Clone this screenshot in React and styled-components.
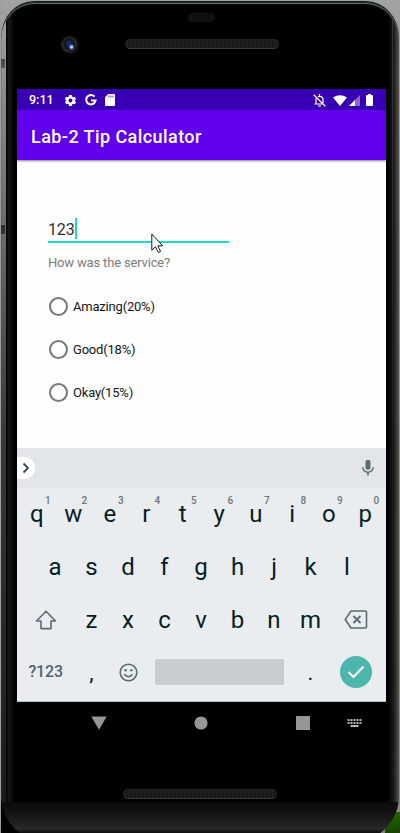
import React from 'react';
import styled, { createGlobalStyle } from 'styled-components';

const Global = createGlobalStyle`
  *, *::before, *::after { box-sizing: border-box; }
  body { margin: 0; overflow: hidden; font-family: Roboto, "Liberation Sans", sans-serif; }
`;

const Backdrop = styled.div`
  width: 400px;
  height: 833px;
  overflow: hidden;
  padding: 1px 1px 0 1px;
  background:
    linear-gradient(#246407, #174500) 385px 812px / 15px 21px no-repeat,
    linear-gradient(#000, #000) 1px 800px / 40px 33px no-repeat,
    linear-gradient(90deg, #9a9e9c 0 1px, transparent 1px),
    linear-gradient(#a0a3a1 0, #9a9a9a 60px, #858585 100%);
`;

const Shell = styled.div`
  position: relative;
  width: 398px;
  height: 841px;
  overflow: hidden;
  padding: 88px 13px 0 16px;
  border-radius: 33px 33px 46px 46px / 36px 36px 46px 46px;
  background:
    linear-gradient(#444, #555) 0 58px / 4px 9px no-repeat,
    linear-gradient(#2c2f2e, #333) 0 224px / 4px 9px no-repeat,
    linear-gradient(transparent 800px, #0b0b0b 802px, #121212 811px, #1b1b1b 818px, #292929 828px, #050505 833px),
    linear-gradient(90deg, transparent 0 5px, #000 5px, #171717 8px, #101010 10px, #000 13px 387px, #151515 391px, transparent 393px),
    linear-gradient(90deg, transparent 0 392px, #151413 392px, #35332f 395px, #5b5955 398px),
    linear-gradient(#a0a3a1 0, #858886 110px, #606462 260px, #343939 440px, #222827 650px, #151818 832px);
  box-shadow: inset 0 2px 1px #18201b, inset 0 3px 1px #768078;
`;

const Sensor = styled.div`
  position: absolute;
  left: 187px;
  top: 12px;
  width: 27px;
  height: 9px;
  border-radius: 5px;
  background: #101010;
`;

const Camera = styled.div`
  position: absolute;
  left: 60px;
  top: 35px;
  width: 18px;
  height: 18px;
  border-radius: 50%;
  background:
    radial-gradient(circle at 10.5px 11px, #b9ceff 0 1px, #3658bd 2px, transparent 3px),
    radial-gradient(circle at 8px 8px, #172d68 0 2px, #0b111e 4.5px, #252525 6px, #202020 8px, #101010 9px);
`;

const Speaker = styled.div`
  position: absolute;
  left: ${(p) => p.$left}px;
  top: ${(p) => p.$top}px;
  width: 154px;
  height: ${(p) => p.$height}px;
  border: 1px solid #252624;
  border-bottom-color: #3d3e3c;
  border-radius: 5px;
  background: repeating-linear-gradient(90deg, #20201e 0 2px, #181817 2px 4px);
`;

const Screen = styled.main`
  width: 369px;
  height: 655px;
  background: #000;
  display: flex;
  flex-direction: column;
`;

const StatusBar = styled.header`
  height: 21px;
  flex: none;
  background: #3900b3;
  color: #fff;
  display: flex;
  align-items: center;
  padding: 1px 13px 0 12px;
`;

const Clock = styled.span`
  width: 35px;
  font-size: 12.5px;
  font-weight: 500;
  line-height: 20px;
`;

const StatusGroup = styled.div`
  display: flex;
  align-items: center;
  gap: ${(p) => p.$gap}px;
  margin-left: ${(p) => (p.$end ? 'auto' : '0')};
`;

const AppBar = styled.div`
  height: 50px;
  flex: none;
  padding: 3px 14px 0;
  display: flex;
  align-items: center;
  background: #6000ec;
  color: #fff;
  position: relative;
  box-shadow: 0 1px 2px rgba(0, 0, 0, .5);
`;

const Title = styled.h1`
  margin: 0;
  font-size: 18px;
  line-height: 24px;
  font-weight: 500;
  letter-spacing: .43px;
  white-space: nowrap;
`;

const Form = styled.section`
  height: 288px;
  flex: none;
  background: #fefefe;
  padding: 58px 31px 0;
  display: flex;
  flex-direction: column;
  align-items: flex-start;
`;

const Amount = styled.div`
  position: relative;
  width: 181px;
  height: 25px;
  border-bottom: 2px solid #20d8c6;
  display: flex;
  align-items: flex-start;
  font-size: 16px;
  line-height: 23px;
  letter-spacing: -.15px;
  color: #303030;
`;

const Caret = styled.span`
  width: 2px;
  height: 21px;
  background: #20d8c6;
`;

const Pointer = styled.svg`
  position: absolute;
  left: 103px;
  top: 15px;
`;

const Question = styled.p`
  margin: 11px 0 0;
  font-size: 13px;
  line-height: 17px;
  letter-spacing: -.17px;
  color: #7c7c7c;
  white-space: nowrap;
`;

const Options = styled.div`
  display: flex;
  flex-direction: column;
  margin-top: 14px;
`;

const Option = styled.label`
  height: 43px;
  display: flex;
  align-items: center;
  gap: 5px;
  padding-left: 1px;
  font-size: 13px;
  letter-spacing: -.2px;
  color: #151515;
  white-space: nowrap;
`;

const Radio = styled.span`
  width: 19px;
  height: 19px;
  border: 2px solid #777;
  border-radius: 50%;
`;

const Strip = styled.div`
  height: 40px;
  flex: none;
  display: flex;
  align-items: center;
  justify-content: space-between;
  padding-right: 8px;
  background: #e2e6e9;
`;

const Expand = styled.div`
  width: 18px;
  height: 22px;
  border-radius: 0 11px 11px 0;
  background: #fff;
  display: flex;
  align-items: center;
  justify-content: center;
`;

const Keys = styled.div`
  height: 214px;
  flex: none;
  background: #e9edf0;
  border-bottom: 1px solid #b6bdc0;
  padding: 0 2px 0 1px;
  display: flex;
  flex-direction: column;
`;

const KeyRow = styled.div`
  height: ${(p) => p.$height || 53}px;
  display: flex;
  align-items: center;
  justify-content: center;
`;

const Key = styled.div`
  position: relative;
  width: ${(p) => p.$width || 36.5}px;
  height: 100%;
  display: flex;
  align-items: center;
  justify-content: center;
  font-size: 24px;
  line-height: 28px;
  color: #071d26;
`;

const Hint = styled.span`
  position: absolute;
  left: 26.5px;
  top: 7px;
  font-size: 10px;
  line-height: 11px;
  font-weight: 500;
  color: #6c777c;
`;

const Mode = styled.span`
  font-size: 16px;
  font-weight: 500;
  color: #52636b;
  letter-spacing: -.1px;
`;

const Punctuation = styled.span`
  font-size: 22px;
  transform: translateY(1px);
`;

const Space = styled.div`
  width: 129px;
  height: 26px;
  border-radius: 2px;
  background: #c8cccf;
`;

const SpaceSlot = styled.div`
  width: 146px;
  display: flex;
  justify-content: center;
`;

const Enter = styled.div`
  width: 32px;
  height: 32px;
  border-radius: 50%;
  background: #4db6ac;
  display: flex;
  align-items: center;
  justify-content: center;
`;

const NavBar = styled.nav`
  height: 42px;
  flex: none;
  display: grid;
  grid-template-columns: 31px 102px 102px 102px 32px;
  align-items: center;
  color: #969696;
`;

const NavItem = styled.div`
  display: flex;
  justify-content: center;
  ${(p) => p.$start && 'grid-column-start: 2;'}
`;

const KeyboardItem = styled(NavItem)`
  justify-content: flex-start;
  svg { flex: none; margin-left: -7px; }
`;

const Gear = () => (
  <svg width="13" height="13" viewBox="2 1.5 21 21" fill="#fff">
    <path fillRule="evenodd" d="M19.4 13c.1-.7.1-1.3 0-2l2.1-1.6-2-3.5-2.5 1a8 8 0 0 0-1.7-1L15 3h-5l-.4 2.9a8 8 0 0 0-1.7 1l-2.5-1-2 3.5L5.5 11c-.1.7-.1 1.3 0 2l-2.1 1.6 2 3.5 2.5-1a8 8 0 0 0 1.7 1L10 21h5l.3-2.9a8 8 0 0 0 1.7-1l2.5 1 2-3.5zM12.5 15.2a3.2 3.2 0 1 1 0-6.4 3.2 3.2 0 0 1 0 6.4z" />
  </svg>
);

const GoogleMark = () => (
  <svg width="12" height="12" viewBox="0 0 12 12" fill="none" stroke="#fff" strokeWidth="2">
    <path d="M9.6 2.7A4.7 4.7 0 1 0 10.6 6.4H6" />
  </svg>
);

const SdCard = () => (
  <svg width="10" height="12" viewBox="0 0 10 12">
    <path fill="#fff" d="M3.2 0H9q1 0 1 1v10q0 1-1 1H1q-1 0-1-1V3.2z" />
    <path stroke="#3900b3" strokeWidth=".8" d="M4 1.5v2M6 1.5v2M8 1.5v2" />
  </svg>
);

const BellOff = () => (
  <svg width="13" height="13" viewBox="0 0 13 13" fill="none" stroke="#fff" strokeWidth="1.2">
    <path d="M3 10V6q0-2 1-2.8M5 2.6q4-1.2 5 2.4v4M1.5 10H10M5 12h3M6.5 0v2M.7.8l11.6 11.5" />
  </svg>
);

const Wifi = () => (
  <svg width="14" height="11" viewBox="0 0 14 11"><path fill="#fff" d="M0 2.5Q7-2.2 14 2.5L7 11z" /></svg>
);

const Signal = () => (
  <svg width="11" height="11" viewBox="0 0 11 11">
    <path fill="#8c67d3" d="M0 11 11 0v11z" /><path fill="#fff" d="M0 11 6 5v6z" />
  </svg>
);

const Battery = () => (
  <svg width="7" height="12" viewBox="0 0 7 12"><path fill="#fff" d="M2 0h3v1h1q1 0 1 1v9q0 1-1 1H1q-1 0-1-1V2q0-1 1-1h1z" /></svg>
);

const Mouse = () => (
  <Pointer width="13" height="21" viewBox="0 0 13 21">
    <path fill="#fff" stroke="#17192a" d="M.8 1v16.2l3.7-3.4 2.8 5.7 2.3-1.2-2.8-5.5h4.9z" />
  </Pointer>
);

const Chevron = () => (
  <svg width="8" height="12" viewBox="0 0 8 12" fill="none" stroke="#37474f" strokeWidth="1.8"><path d="m1.5 1.5 4.5 4.5-4.5 4.5" /></svg>
);

const Mic = () => (
  <svg width="20" height="20" viewBox="0 0 24 24" fill="#5b6b72">
    <path d="M12 14a3 3 0 0 0 3-3V5a3 3 0 0 0-6 0v6a3 3 0 0 0 3 3zm5.3-3a5.3 5.3 0 0 1-10.6 0H5c0 3.4 2.7 6.2 6 6.7V21h2v-3.3c3.3-.5 6-3.3 6-6.7z" />
  </svg>
);

const Shift = () => (
  <svg width="22" height="20" viewBox="0 0 22 20" fill="none" stroke="#5b6b72" strokeWidth="1.6" strokeLinejoin="round">
    <path d="M11 1.2 1.5 11H6v7.6h10V11h4.5z" />
  </svg>
);

const Backspace = () => (
  <svg width="24" height="19" viewBox="0 0 24 19" fill="none" stroke="#5b6b72" strokeWidth="1.6" strokeLinejoin="round">
    <path d="M7 1h14.5q1 0 1 1v15q0 1-1 1H7L1.3 9.5z" />
    <path strokeWidth="1.9" d="M9.5 6l7 7M16.5 6l-7 7" />
  </svg>
);

const Smile = () => (
  <svg width="19" height="19" viewBox="0 0 19 19">
    <circle cx="9.5" cy="9.5" r="8.3" fill="none" stroke="#5b6b72" strokeWidth="1.6" />
    <circle cx="6.6" cy="7.2" r="1.2" fill="#5b6b72" /><circle cx="12.4" cy="7.2" r="1.2" fill="#5b6b72" />
    <path d="M5.3 11.3Q9.5 16 13.7 11.3" fill="none" stroke="#5b6b72" strokeWidth="1.5" />
  </svg>
);

const Check = () => (
  <svg width="18" height="14" viewBox="0 0 18 14" fill="none" stroke="#fff" strokeWidth="2"><path d="m1.5 7 5 5L16.5 1.5" /></svg>
);

const KeyboardGlyph = () => (
  <svg width="15" height="9" viewBox="0 0 15 9">
    <path stroke="#b4b4b4" strokeWidth="2" strokeDasharray="2 1" d="M.5 1h14M.5 4h14" />
    <path stroke="#b4b4b4" strokeWidth="2" d="M3.5 7h8" />
  </svg>
);

export default function App() {
  return (
    <>
      <Global />
      <Backdrop>
        <Shell>
          <Sensor />
          <Camera />
          <Speaker $left={124} $top={38} $height={10} />
          <Screen>
            <StatusBar>
              <Clock>9:11</Clock>
              <StatusGroup $gap={8}><Gear /><GoogleMark /><SdCard /></StatusGroup>
              <StatusGroup $gap={2} $end>
                <StatusGroup $gap={7}><BellOff /><Wifi /></StatusGroup>
                <StatusGroup $gap={6}><Signal /><Battery /></StatusGroup>
              </StatusGroup>
            </StatusBar>
            <AppBar><Title>Lab-2 Tip Calculator</Title></AppBar>
            <Form>
              <Amount>123<Caret /><Mouse /></Amount>
              <Question>How was the service?</Question>
              <Options>
                {['Amazing(20%)', 'Good(18%)', 'Okay(15%)'].map((text) => (
                  <Option key={text}><Radio />{text}</Option>
                ))}
              </Options>
            </Form>
            <Strip><Expand><Chevron /></Expand><Mic /></Strip>
            <Keys>
              <KeyRow $height={52}>
                {[...'qwertyuiop'].map((k, i) => <Key key={k}>{k}<Hint>{(i + 1) % 10}</Hint></Key>)}
              </KeyRow>
              <KeyRow>{[...'asdfghjkl'].map((k) => <Key key={k}>{k}</Key>)}</KeyRow>
              <KeyRow>
                <Key $width={55}><Shift /></Key>
                {[...'zxcvbnm'].map((k) => <Key key={k}>{k}</Key>)}
                <Key $width={55}><Backspace /></Key>
              </KeyRow>
              <KeyRow $height={52}>
                <Key $width={55}><Mode>?123</Mode></Key>
                <Key><Punctuation>,</Punctuation></Key>
                <Key><Smile /></Key>
                <SpaceSlot><Space /></SpaceSlot>
                <Key><Punctuation>.</Punctuation></Key>
                <Key $width={55}><Enter><Check /></Enter></Key>
              </KeyRow>
            </Keys>
            <NavBar>
              <NavItem $start><svg width="16" height="14" viewBox="0 0 16 14"><path fill="currentColor" d="M.3.5h15.4L8 13.8z" /></svg></NavItem>
              <NavItem><svg width="14" height="14"><circle cx="7" cy="7" r="6.6" fill="currentColor" /></svg></NavItem>
              <NavItem><svg width="14" height="14"><rect width="14" height="14" rx=".5" fill="currentColor" /></svg></NavItem>
              <KeyboardItem><KeyboardGlyph /></KeyboardItem>
            </NavBar>
          </Screen>
          <Speaker $left={122} $top={788} $height={10} />
        </Shell>
      </Backdrop>
    </>
  );
}
